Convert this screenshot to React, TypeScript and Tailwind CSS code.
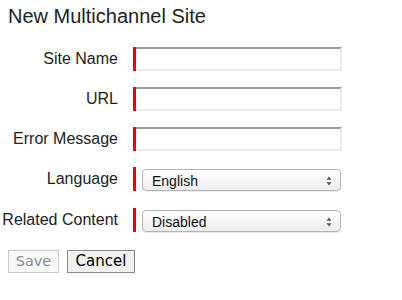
import React from "react";

const Arrows = () => (
  <svg width="6" height="10" viewBox="0 0 6 10" className="absolute right-[8px] top-[6px]">
    <path d="M3 0.5 L5.5 3.8 L0.5 3.8 Z" fill="#555" />
    <path d="M3 9.5 L5.5 6.2 L0.5 6.2 Z" fill="#555" />
  </svg>
);

function InputRow({ label }: { label: string }) {
  return (
    <div className="flex items-center h-[24px]">
      <div className="w-[118px] text-right text-[16px] leading-[24px] text-[#222]">{label}</div>
      <div className="ml-[15px] w-[3px] h-[24px] bg-[#f20000]" />
      <div className="h-[24px] w-[206px] border-t-2 border-t-[#9a9a9a] border-r-2 border-r-[#ececec] border-b-2 border-b-[#ececec] bg-white" />
    </div>
  );
}

function SelectRow({ label, value, extra }: { label: string; value: string; extra?: string }) {
  return (
    <div className={"flex items-end h-[24px] " + (extra ?? "")}>
      <div className="w-[118px] self-center text-right text-[16px] leading-[24px] text-[#222]">{label}</div>
      <div className="ml-[15px] w-[3px] h-[24px] bg-[#f20000]" />
      <div className="relative ml-[6px] h-[22px] w-[199px] rounded-[4px] border border-[#b4b4b4] bg-gradient-to-b from-white to-[#ececec] shadow-[0_1px_1px_rgba(0,0,0,0.08)]">
        <span className="absolute left-[9px] top-[1px] text-[14px] leading-[20px] text-[#111]">{value}</span>
        <Arrows />
      </div>
    </div>
  );
}

export default function App() {
  return (
    <div className="w-[402px] h-[300px] bg-white" style={{ fontFamily: '"Liberation Sans", Arial, sans-serif' }}>
      <div className="pt-[4px] pl-[8px] text-[20px] leading-[24px] text-[#222]">New Multichannel Site</div>
      <div className="mt-[19px] flex flex-col gap-[16px]">
        <InputRow label="Site Name" />
        <InputRow label="URL" />
        <InputRow label="Error Message" />
        <SelectRow label="Language" value="English" />
        <SelectRow label="Related Content" value="Disabled" extra="mt-[1px]" />
      </div>
      <div
        className="mt-[18px] ml-[8px] flex gap-[8px]"
        style={{ fontFamily: '"DejaVu Sans", Verdana, sans-serif' }}
      >
        <div className="w-[51px] h-[23px] border border-[#c8c8c8] bg-[#f8f8f8] text-center text-[14.5px] leading-[21px] text-[#8a8a8a]">
          Save
        </div>
        <div className="w-[68px] h-[23px] border border-[#8c8c8c] bg-[#f0f0f0] text-center text-[15px] leading-[21px] text-black">
          Cancel
        </div>
      </div>
    </div>
  );
}
